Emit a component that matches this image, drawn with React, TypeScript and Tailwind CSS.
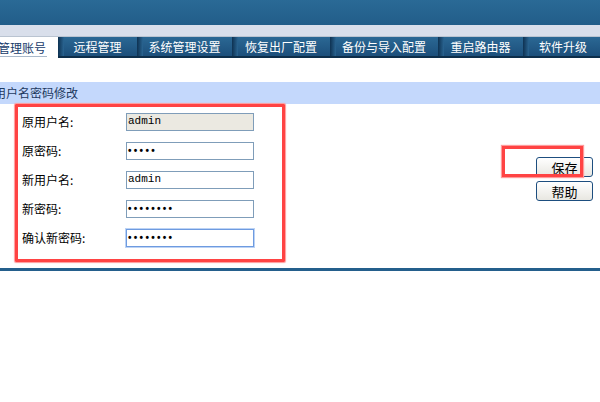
import React from "react";

const cjk = { fontFamily: '"Noto Sans CJK SC", "Noto Sans", sans-serif' };

function Tab({ label, w }: { label: string; w: number }) {
  return (
    <div className="flex h-full shrink-0 border-b-2 border-[#0d2e4a] bg-gradient-to-b from-[#2b6894] to-[#1c4f7b]" style={{ width: w }}>
      <div className="w-[6px] h-full bg-gradient-to-r from-[#0e3252] to-[#2a6592]" />
      <div className="flex-1 flex items-center justify-center text-white text-[12px] leading-none pr-[6px]">{label}</div>
    </div>
  );
}

function Field({ label, value, kind = "normal" }: { label: string; value: string; kind?: "disabled" | "normal" | "focus" }) {
  const base =
    kind === "disabled"
      ? "border-[#7f9db9] bg-[#ebe9e1]"
      : kind === "focus"
      ? "border-[#6e9be0] bg-white shadow-[0_0_0_1px_#bcd3f5]"
      : "border-[#7f9db9] bg-white";
  const isPwd = value.startsWith("•");
  return (
    <div className="flex items-center h-[29px]">
      <div className="w-[104px] text-[12px] text-black leading-none">{label}</div>
      <div className={`w-[128px] h-[18px] border ${base} flex items-center px-[1px]`}>
        {isPwd ? (
          <span className="text-[10px] font-bold leading-none tracking-[2.3px] text-black" style={{ fontFamily: '"Liberation Sans", sans-serif' }}>
            {value}
          </span>
        ) : (
          <span className="text-[11px] leading-none text-black" style={{ fontFamily: '"Liberation Mono", monospace' }}>
            {value}
          </span>
        )}
      </div>
    </div>
  );
}

export default function App() {
  return (
    <div className="relative w-[600px] h-[402px] overflow-hidden bg-white" style={cjk}>
      <div className="h-[25px] bg-gradient-to-b from-[#2a6a96] to-[#225d89]" />
      <div className="h-[12px] bg-[#d9dfeb] border-b border-[#bac4d1]" />
      <div className="flex h-[21px] bg-[#d9dfeb]">
        <div className="relative shrink-0 ml-[-14px] w-[72px] h-full bg-white flex items-center justify-center text-[12px] leading-none text-[#173b6a]">
          <span>管理账号</span>
          <div className="absolute left-[0px] right-[11px] bottom-[1px] h-[1px] bg-[#a9b8ca]" />
        </div>
        <Tab label="远程管理" w={79} />
        <Tab label="系统管理设置" w={95} />
        <Tab label="恢复出厂配置" w={98} />
        <Tab label="备份与导入配置" w={108} />
        <Tab label="重启路由器" w={85} />
        <Tab label="软件升级" w={80} />
      </div>
      <div className="h-[24px]" />
      <div className="h-[22px] bg-[#c4d8fc] flex items-center ml-[-6px] text-[12px] leading-none text-[#1d3960]">
        用户名密码修改
      </div>
      <div className="flex h-[164px]">
        <div className="ml-[15px] w-[270px] h-[158px] border-[3px] border-[#ff4343] rounded-[1px] shadow-[0_0_1px_1px_#ff9a9a] pl-[4px] pt-0">
          <Field label="原用户名:" value="admin" kind="disabled" />
          <Field label="原密码:" value="•••••" />
          <Field label="新用户名:" value="admin" />
          <Field label="新密码:" value="••••••••" />
          <Field label="确认新密码:" value="••••••••" kind="focus" />
        </div>
        <div className="flex-1" />
        <div className="relative mr-[7px] mt-[53px] flex flex-col gap-[4px]">
          <button className="w-[57px] h-[20px] border border-[#1d4e7f] rounded-[3px] bg-gradient-to-b from-white to-[#e8e7e1] text-[13px] leading-none text-black flex items-center justify-center">
            保存
          </button>
          <button className="w-[57px] h-[20px] border border-[#1d4e7f] rounded-[3px] bg-gradient-to-b from-white to-[#e8e7e1] text-[13px] leading-none text-black flex items-center justify-center">
            帮助
          </button>
          <div className="absolute left-[-34px] top-[-11px] w-[81px] h-[31px] border-[3px] border-[#ff4343] shadow-[0_0_1px_1px_#ff9a9a]" />
        </div>
      </div>
      <div className="h-[3px] bg-[#245f8c]" />
    </div>
  );
}
